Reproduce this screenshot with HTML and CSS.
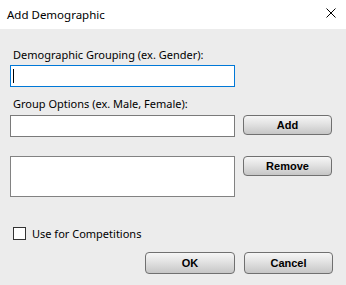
FILE: index.html
```html
<!DOCTYPE html>
<html lang="en">
<head>
  <meta charset="UTF-8">
  <title>Add Demographic</title>
  <link rel="stylesheet" href="styles.css">
</head>
<body>
  <div class="dialog">
    <div class="title-bar">
      <span class="title">Add Demographic</span>
      <svg class="close" width="10" height="10" viewBox="0 0 10 10">
        <path d="M0.5 0.5 L9.5 9.5 M9.5 0.5 L0.5 9.5" stroke="#000" stroke-width="1" fill="none"/>
      </svg>
    </div>

    <div class="content">
      <label class="field-label" for="grouping">Demographic Grouping (ex. Gender):</label>
      <div class="input-wrap">
        <input type="text" id="grouping" class="text-input focused">
        <span class="caret"></span>
      </div>

      <label class="field-label second" for="options">Group Options (ex. Male, Female):</label>
      <div class="row">
        <input type="text" id="options" class="text-input">
        <button class="btn">Add</button>
      </div>

      <div class="row list-row">
        <div class="list-box"></div>
        <button class="btn">Remove</button>
      </div>

      <div class="check-row">
        <span class="check-box"></span>
        <span class="check-label">Use for Competitions</span>
      </div>

      <div class="footer">
        <button class="btn">OK</button>
        <button class="btn">Cancel</button>
      </div>
    </div>
  </div>
</body>
</html>
```

FILE: styles.css
```css
body {
  margin: 0;
  padding: 0;
  font-family: 'Noto Sans', sans-serif;
  font-size: 11px;
  color: #000;
}

.dialog {
  width: 346px;
  height: 285px;
  background-color: #ececec;
  display: flex;
  flex-direction: column;
}

.title-bar {
  height: 29px;
  background-color: #fff;
  display: flex;
  align-items: center;
  justify-content: space-between;
  padding: 0 10px 0 7px;
}

.title {
  font-size: 11.5px;
  line-height: 15px;
  margin-top: -1px;
}

.close {
  display: block;
  margin-top: -3px;
}

.content {
  padding: 18px 0 0 10px;
}

.field-label {
  display: block;
  line-height: 15px;
  padding-left: 3px;
  margin-bottom: 3px;
}

.field-label.second {
  margin-top: 9px;
  margin-bottom: 4px;
}

.input-wrap {
  position: relative;
  width: 225px;
}

.caret {
  position: absolute;
  left: 3px;
  top: 4px;
  width: 1px;
  height: 14px;
  background-color: #000;
}

.text-input {
  display: block;
  box-sizing: border-box;
  width: 225px;
  height: 22px;
  margin: 0;
  border: 1px solid #7a7a7a;
  background-color: #fff;
  padding: 0 3px;
  outline: none;
}

.text-input.focused {
  border-color: #0078d7;
  caret-color: transparent;
}

.row {
  display: flex;
  align-items: flex-start;
  gap: 8px;
}

.list-row {
  margin-top: 19px;
}

.list-box {
  box-sizing: border-box;
  width: 225px;
  height: 41px;
  border: 1px solid #828282;
  background-color: #fff;
}

.btn {
  box-sizing: border-box;
  width: 89px;
  height: 20px;
  padding: 0;
  border: 1px solid #707070;
  border-radius: 4px;
  background: linear-gradient(to bottom, #f6f6f6 0%, #e2e2e2 45%, #c6c6c6 100%);
  font-family: 'Liberation Sans', sans-serif;
  font-size: 11px;
  font-weight: bold;
  color: #000;
}

.check-row {
  display: flex;
  align-items: center;
  gap: 6px;
  margin-top: 29px;
  padding-left: 3px;
}

.check-box {
  box-sizing: border-box;
  width: 13px;
  height: 13px;
  border: 1px solid #333;
  background-color: #fff;
}

.check-label {
  line-height: 15px;
}

.footer {
  display: flex;
  gap: 9px;
  margin-top: 11px;
  padding-left: 135px;
}

.footer .btn {
  height: 22px;
}

.footer .btn:first-child {
  width: 90px;
}
```
